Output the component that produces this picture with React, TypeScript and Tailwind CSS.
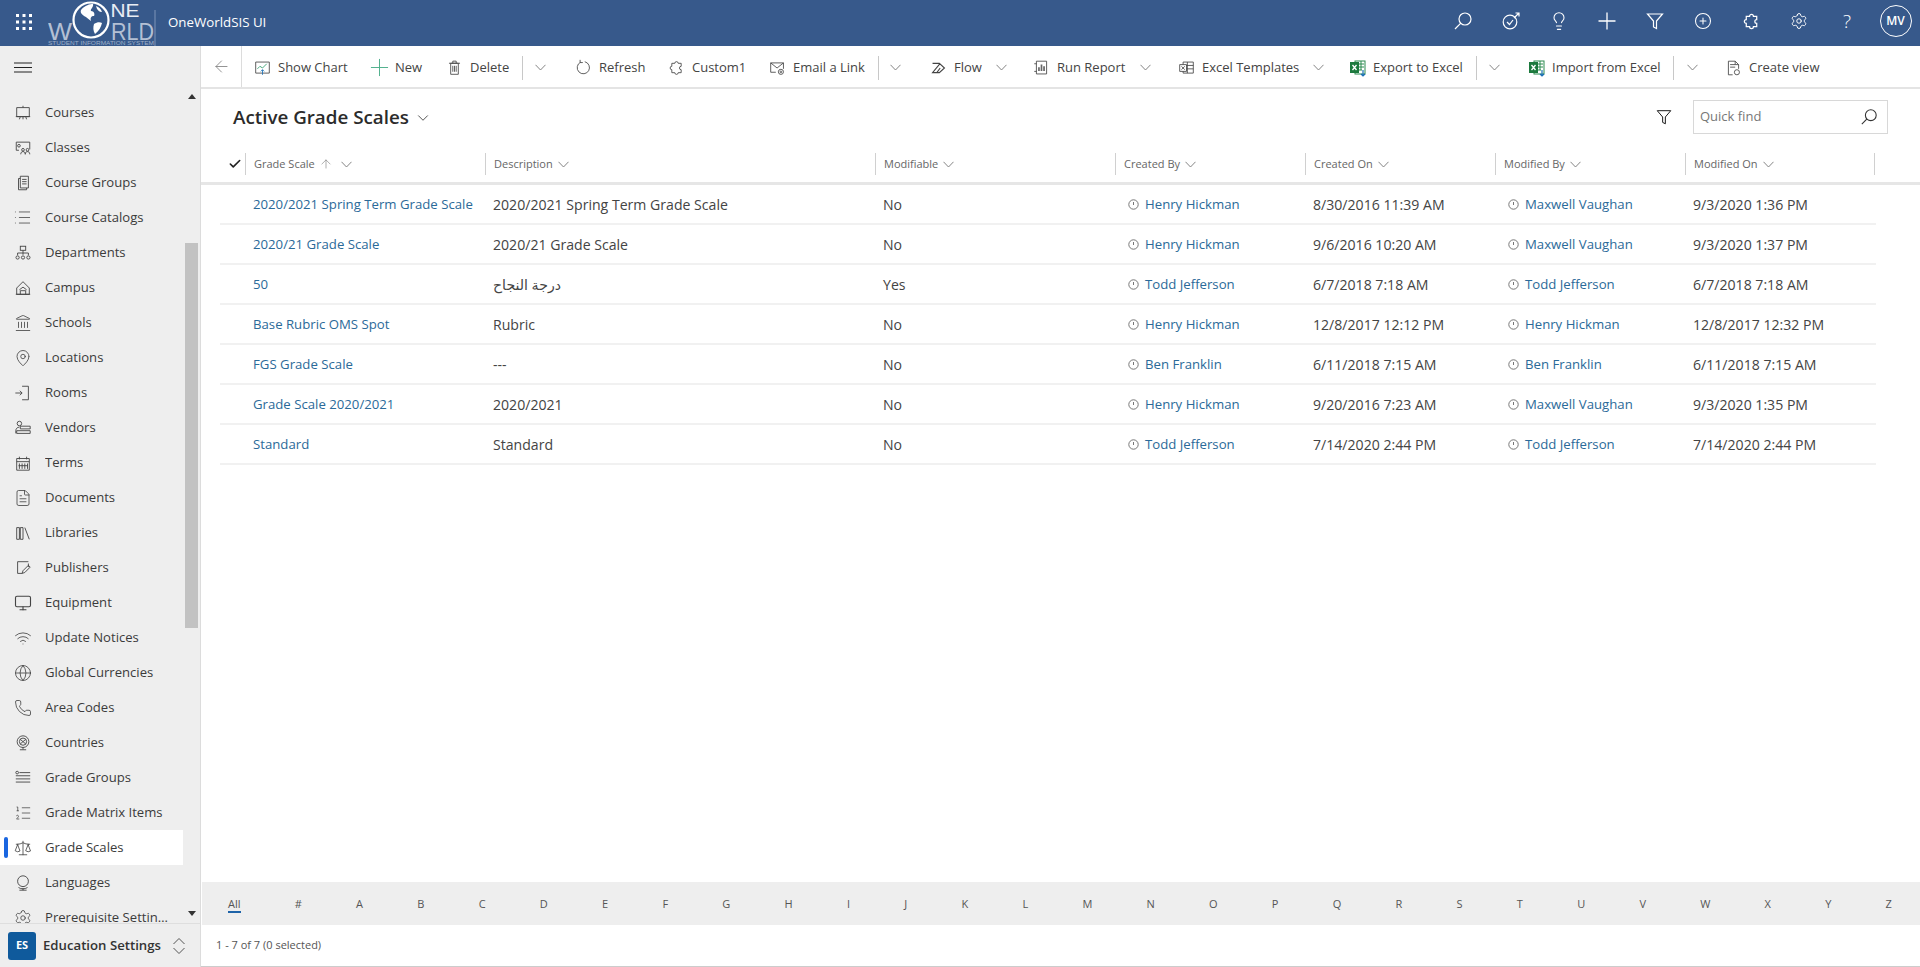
import React from "react";
import {
  Lightbulb, CirclePlus, Settings, ArrowLeft, List, Landmark, MapPin,
  Monitor, Wifi, Globe, Phone, ListOrdered, Scale, ChevronDown, ArrowUp, Check, FileText,
} from "lucide-react";

const S: React.FC<{ s?: number; w?: number; c?: string; children: React.ReactNode }> = ({ s = 18, w = 1, c = "", children }) => (
  <svg width={s} height={s} viewBox="0 0 20 20" fill="none" stroke="currentColor" strokeWidth={w} className={c}>
    {children}
  </svg>
);

const Puzzle = ({ s = 18, w = 1 }: { s?: number; w?: number }) => (
  <S s={s} w={w}>
    <path d="M4.5 4.5H8a2 2 0 1 1 4 0h3.5V8a2 2 0 1 0 0 4v3.5H12a2 2 0 1 1-4 0H4.5V12a2 2 0 1 1 0-4z" />
  </S>
);
const Funnel = ({ s = 18, w = 1 }: { s?: number; w?: number }) => (
  <S s={s} w={w}>
    <path d="M2.5 3h15l-6 7v7.5l-3-1.5v-6z" />
  </S>
);
const Lens = ({ s = 20, w = 1.2 }: { s?: number; w?: number }) => (
  <S s={s} w={w}>
    <circle cx={12} cy={8} r={6} />
    <path d="M7.8 12.2 2 18" />
  </S>
);
const Excel = () => (
  <svg width={18} height={18} viewBox="0 0 18 18" className="shrink-0">
    <rect x={6} y={2} width={10} height={13} fill="#fff" stroke="#2b8a4e" />
    <path d="M9 5h6M9 8h6M9 11h4M12 2v9" stroke="#2b8a4e" />
    <rect x={1} y={3} width={9} height={11} fill="#1d7a3e" />
    <path d="M3.5 6l4 5M7.5 6l-4 5" stroke="#fff" strokeWidth={1.3} />
    <path d="M14 11v6M12 15l2 2 2-2" stroke="#1a6fb5" strokeWidth={1.2} fill="none" />
  </svg>
);

const Chev = ({ c = "" }: { c?: string }) => (
  <svg width={11} height={7} viewBox="0 0 11 7" fill="none" stroke="currentColor" strokeWidth={0.9} className={c}>
    <path d="M0.5 0.8 5.5 6l5-5.2" />
  </svg>
);

const icons: Record<string, React.ReactNode> = {
  Courses: <S><path d="M3 4h14v10H3zM10 2v2M2 14h16M7 14l-1 3M10 14v3M13 14l1 3" /></S>,
  Classes: (
    <S><path d="M2.5 3.5h15v8M2.5 3.5v9h3" /><circle cx={5.5} cy={7.5} r={1.5} /><circle cx={10} cy={12} r={1.5} /><circle cx={15} cy={12} r={1.5} /><path d="M7.5 17c0-2 1-3 2.5-3s2.5 1 2.5 3M12.5 17c0-2 1-3 2.5-3s2.5 1 2.5 3" /></S>
  ),
  "Course Groups": <S><path d="M7 2.5h9v13H7zM7 5H5v12.5h9v-2M9 6h5M9 8.5h5M9 11h5" /></S>,
  "Course Catalogs": <List size={19} strokeWidth={1} />,
  Departments: (
    <S><rect x={7} y={2.5} width={6} height={4.5} /><path d="M10 7v5M4 12.500v-2.500h12v2.500" /><circle cx={4} cy={15} r={1.8} /><circle cx={10} cy={15} r={1.8} /><circle cx={16} cy={15} r={1.8} /></S>
  ),
  Campus: <S><path d="M3 17V10l7-7 7 7v7zM2 17h16M7 17v-4h6v4M6 12l4-3 4 3" /></S>,
  Schools: <Landmark size={18} strokeWidth={1.1} />,
  Locations: <MapPin size={18} strokeWidth={1.1} />,
  Rooms: <S><path d="M9 2.500h7v15H9M1.500 10H9M6.500 7.500 9 10l-2.500 2.500" /></S>,
  Vendors: <S><circle cx={6} cy={5} r={2.5} /><path d="M2 16v-3c0-2 1.500-4 4-4M7 8h11v3H7zM3 13h15v3H3z" /></S>,
  Terms: <S><path d="M3 5h14v13H3zM3 8.500h14M6 3v3M14 3v3M6 10.500v6M9 10.500v6M12 10.500v6M15 10.500v6M5 13h10" /></S>,
  Documents: <FileText size={18} strokeWidth={1.1} />,
  Libraries: <S><path d="M3 4h3v13H3zM7 4h3v13H7zM12 4l5 13" /></S>,
  Publishers: <S><path d="M4 3h12M4 3v13h5M16 5v4M9 16l1-3 6-6 2 2-6 6z" /></S>,
  Equipment: <Monitor size={18} strokeWidth={1.5} />,
  "Update Notices": <Wifi size={18} strokeWidth={1.1} />,
  "Global Currencies": <Globe size={18} strokeWidth={1.1} />,
  "Area Codes": <Phone size={18} strokeWidth={1.1} />,
  Countries: <S><circle cx={10} cy={8.500} r={6.500} /><circle cx={10} cy={8.500} r={4} /><path d="M7 6l6 5M13 6l-6 5M10 15v2M6.500 17.500h7" /></S>,
  "Grade Groups": <S><path d="M6 4h12M2 7.500h16M2 11h16M2 14.500h16" /><circle cx={3.500} cy={4} r={1.500} /></S>,
  "Grade Matrix Items": <ListOrdered size={18} strokeWidth={1} />,
  "Grade Scales": <Scale size={18} strokeWidth={1.1} />,
  Languages: <S><circle cx={10} cy={8} r={6} /><path d="M5 15c3 2 7 2 10 0M10 15.500V18M6 18h8" /></S>,
  "Prerequisite Settings": <Settings size={18} strokeWidth={1.1} />,
};

const navItems = Object.keys(icons);

const NavItem = ({ name }: { name: string }) => {
  const active = name === "Grade Scales";
  return (
    <div className={`relative flex h-[35px] w-[183px] shrink-0 items-center pl-[13px] ${active ? "bg-white" : ""}`}>
      {active && <span className="absolute left-[4px] top-[7px] h-[21px] w-[4px] rounded-sm bg-[#1a66e0]" />}
      <span className="flex w-[19px] justify-center text-[#444]">{icons[name]}</span>
      <span className="ml-[13px] w-[123px] truncate text-[13.1px] text-[#3b3b3b]">{name}</span>
    </div>
  );
};

const Cmd = ({ icon, label, w }: { icon: React.ReactNode; label: string; w: string }) => (
  <div className={`flex h-full shrink-0 items-center text-[13px] text-[#444] ${w}`}>
    <span className="mr-[7px] flex w-[17px] justify-center text-[#444]">{icon}</span>
    <span className="whitespace-nowrap">{label}</span>
  </div>
);

const Sep = () => <span className="h-[24px] w-px shrink-0 bg-[#c8c8c8]" />;

const HCell = ({ label, extra, last }: { label: string; extra?: React.ReactNode; last?: boolean }) => (
  <div className={`flex h-[22px] items-center border-l border-[#d0d0d0] pl-[8px] text-[11px] text-[#666] ${last ? "border-r" : ""}`}>
    <span>{label}</span>
    {extra}
    {!extra && <Chev c="ml-[5px] text-[#777]" />}
  </div>
);

const Owner = ({ name }: { name: string }) => (
  <div className="flex items-center pl-[13px] pt-[2px]">
    <svg width={11} height={11} viewBox="0 0 11 11" fill="none" stroke="#777" className="shrink-0">
      <circle cx={5.5} cy={5.5} r={4.7} />
      <path d="M5.5 3v3" />
    </svg>
    <span className="ml-[6px] text-[13.2px] text-[#2b6a99]">{name}</span>
  </div>
);

const rows = [
  ["2020/2021 Spring Term Grade Scale", "2020/2021 Spring Term Grade Scale", "No", "Henry Hickman", "8/30/2016 11:39 AM", "Maxwell Vaughan", "9/3/2020 1:36 PM"],
  ["2020/21 Grade Scale", "2020/21 Grade Scale", "No", "Henry Hickman", "9/6/2016 10:20 AM", "Maxwell Vaughan", "9/3/2020 1:37 PM"],
  ["50", "درجة النجاح", "Yes", "Todd Jefferson", "6/7/2018 7:18 AM", "Todd Jefferson", "6/7/2018 7:18 AM"],
  ["Base Rubric OMS Spot", "Rubric", "No", "Henry Hickman", "12/8/2017 12:12 PM", "Henry Hickman", "12/8/2017 12:32 PM"],
  ["FGS Grade Scale", "---", "No", "Ben Franklin", "6/11/2018 7:15 AM", "Ben Franklin", "6/11/2018 7:15 AM"],
  ["Grade Scale 2020/2021", "2020/2021", "No", "Henry Hickman", "9/20/2016 7:23 AM", "Maxwell Vaughan", "9/3/2020 1:35 PM"],
  ["Standard", "Standard", "No", "Todd Jefferson", "7/14/2020 2:44 PM", "Todd Jefferson", "7/14/2020 2:44 PM"],
];

const letters = "#ABCDEFGHIJKLMNOPQRSTUVWXYZ".split("");
const gridCols = "grid grid-cols-[25px_240px_390px_240px_190px_190px_190px_190px]";

const TopIcon = ({ children }: { children: React.ReactNode }) => (
  <div className="flex h-full w-[48px] items-center justify-center text-white">{children}</div>
);

export default function App() {
  return (
    <div className="flex h-[967px] w-[1920px] flex-col overflow-hidden bg-white font-['Open_Sans','DejaVu_Sans',sans-serif]">
      <header className="flex h-[46px] shrink-0 items-center bg-[#37598b] text-white">
        <div className="flex w-[48px] justify-center pb-[3px]">
          <svg width={16} height={16} viewBox="0 0 16 16" fill="#fff">
            {[0, 6.5, 13].flatMap((x) => [0, 6.5, 13].map((y) => <rect key={`${x}-${y}`} x={x} y={y} width={3} height={3} />))}
          </svg>
        </div>
        <svg width={108} height={46} viewBox="0 0 108 46" className="shrink-0 overflow-hidden" fill="none">
          <g fontFamily="'Liberation Sans', sans-serif" fill="#b4c0d4">
            <text x={62.5} y={17} fontSize={19} fill="#e8edf4" textLength={29} lengthAdjust="spacingAndGlyphs">NE</text>
            <text x={0} y={40} fontSize={24} textLength={24} lengthAdjust="spacingAndGlyphs">W</text>
            <text x={63} y={40} fontSize={24} textLength={43} lengthAdjust="spacingAndGlyphs">RLD</text>
            <text x={0} y={45} fontSize={4.6} textLength={106} lengthAdjust="spacingAndGlyphs" fill="#9fb0c9">STUDENT INFORMATION SYSTEM</text>
          </g>
          <circle cx={43} cy={20} r={17.5} fill="#37598b" stroke="#fff" strokeWidth={2.2} />
          <path d="M33 10c4-5 9-6 12-6 1 3-3 5-2 7 3 0 4 3 3 5-3 0-4 2-3 5-3-2-4-4-7-5-2-2-4-3-3-6zM46 24c3-2 6-2 8-1-1 4-3 8-7 11-2-3-2-7-1-10zM48 6c3 1 5 3 6 6-3 0-5-2-6-6z" fill="#fff" />
          <path d="M107 10v36" stroke="#7f95b8" />
        </svg>
        <span className="ml-[12px] text-[13.3px]">OneWorldSIS UI</span>
        <div className="ml-auto flex h-full items-center pb-[4px]">
          <TopIcon><Lens s={20} /></TopIcon>
          <TopIcon>
            <S s={20} w={1.2}><circle cx={9} cy={11} r={6.8} /><path d="M6 11l2.500 2.500 3.500-4.500M13 7l5-5M14.500 2H18v3.500" /></S>
          </TopIcon>
          <TopIcon><Lightbulb size={20} strokeWidth={1.3} /></TopIcon>
          <TopIcon><S s={20} w={1.3}><path d="M10 1.500v17M1.500 10h17" /></S></TopIcon>
          <TopIcon><Funnel s={20} w={1.2} /></TopIcon>
          <TopIcon><CirclePlus size={18} strokeWidth={1.4} /></TopIcon>
          <TopIcon><Puzzle s={19} w={1.3} /></TopIcon>
          <TopIcon><Settings size={18} strokeWidth={1.3} /></TopIcon>
          <TopIcon><span className="text-[19px] font-light">?</span></TopIcon>
          <div className="flex h-full w-[49px] items-center justify-center">
            <span className="flex h-[32px] w-[32px] items-center justify-center rounded-full border border-white text-[12px] font-semibold">MV</span>
          </div>
        </div>
      </header>

      <div className="flex min-h-0 flex-1">
        <aside className="flex w-[201px] shrink-0 flex-col border-r border-[#dcdcdc] bg-[#eeeeee]">
          <div className="flex h-[42px] shrink-0 items-center pl-[14px] text-[#222]">
            <svg width={18} height={11} viewBox="0 0 18 11" fill="none" stroke="currentColor">
              <path d="M0 1h18M0 5.500h18M0 10h18" />
            </svg>
          </div>
          <div className="flex min-h-0 flex-1 overflow-hidden">
            <nav className="flex w-[183px] shrink-0 flex-col pt-[7px]">
              {navItems.map((n) => <NavItem key={n} name={n} />)}
            </nav>
            <div className="flex w-[17px] flex-col items-center">
              <span className="mt-[6px] h-0 w-0 border-x-[4px] border-b-[5px] border-x-transparent border-b-[#333]" />
              <div className="mt-[144px] h-[385px] w-[13px] bg-[#c2c2c2]" />
              <span className="mt-[283px] h-0 w-0 border-x-[4px] border-t-[5px] border-x-transparent border-t-[#333]" />
            </div>
          </div>
          <div className="flex h-[44px] shrink-0 items-center border-t border-[#dedede] pl-[8px]">
            <span className="flex h-[28px] w-[28px] items-center justify-center rounded-[3px] bg-[#0f5a9c] text-[11px] font-bold text-white">ES</span>
            <span className="ml-[7px] whitespace-nowrap text-[13.2px] font-semibold text-[#333]">Education Settings</span>
            <svg width={14} height={18} viewBox="0 0 14 18" fill="none" stroke="#555" className="ml-[11px]">
              <path d="M1.500 7 7 1.500 12.500 7M1.500 11 7 16.500 12.500 11" />
            </svg>
          </div>
        </aside>

        <main className="flex min-w-0 flex-1 flex-col">
          <div className="flex h-[43px] shrink-0 items-center border-b-2 border-[#e4e4e4]">
            <div className="flex h-full w-[41px] shrink-0 items-center justify-center border-r border-[#dcdcdc] text-[#777]">
              <ArrowLeft size={19} strokeWidth={1} />
            </div>
            <div className="flex h-full items-center pl-[12px] pt-[2px]">
              <Cmd w="w-[117px]" label="Show Chart" icon={
                <S s={18}><path d="M2 3h16v13H2z" /><path d="M4 11l3-3 3 2 5-5" stroke="#2f9e6e" /><path d="M10 18v-6M8 14l2-2 2 2" stroke="#1a6fb5" /></S>
              } />
              <Cmd w="w-[75px]" label="New" icon={<span className="text-[#4cae8a]"><S s={19}><path d="M10 1v18M1 10h18" /></S></span>} />
              <Cmd w="w-[76px]" label="Delete" icon={<S s={19}><path d="M5.500 5h9v13h-9zM3.500 5h13M8 5V2.500h4V5M8 8v7M10 8v7M12 8v7" /></S>} />
              <Sep />
              <div className="flex h-full w-[34px] shrink-0 items-center justify-center"><Chev c="text-[#777]" /></div>
              <div className="ml-[18px] h-full"><Cmd w="w-[93px]" label="Refresh" icon={<S s={19}><path d="M11.500 3.200a7.200 7.200 0 1 1-5 .6M6 1v3.200h3.200" /></S>} /></div>
              <Cmd w="w-[101px]" label="Custom1" icon={<Puzzle s={18} />} />
              <Cmd w="w-[109px]" label="Email a Link" icon={
                <S s={18}><path d="M8 15H2V4h15v7M2 4l7.500 6L17 4" /><circle cx={14} cy={14.500} r={3} /><circle cx={14} cy={14.500} r={1} /></S>
              } />
              <Sep />
              <div className="flex h-full w-[32px] shrink-0 items-center justify-center"><Chev c="text-[#777]" /></div>
              <div className="ml-[19px] h-full"><Cmd w="w-[54px]" label="Flow" icon={
                <S s={18} w={1.3}><path d="M3 4.500h8l6 5.500-6 5.500H3l9-11M8 15.500l4-5.500" /></S>
              } /></div>
              <div className="flex h-full w-[34px] shrink-0 items-center justify-center"><Chev c="text-[#777]" /></div>
              <div className="ml-[15px] h-full"><Cmd w="w-[95px]" label="Run Report" icon={
                <S s={18}><path d="M4 2h12v15H4zM1.500 5H4M1.500 14H4" /><path d="M7 13.500V9M10 13.500V6M13 13.500V8" stroke="#666" strokeWidth={2} /></S>
              } /></div>
              <div className="flex h-full w-[34px] shrink-0 items-center justify-center"><Chev c="text-[#777]" /></div>
              <div className="ml-[16px] h-full"><Cmd w="w-[123px]" label="Excel Templates" icon={
                <S s={18}><path d="M6 3h12v13H6zM6 7h12M6 11h12M11 3v13" /><path d="M2 6h8v8H2z" fill="#fff" /><path d="M4 8l4 4M8 8l-4 4" /></S>
              } /></div>
              <div className="flex h-full w-[34px] shrink-0 items-center justify-center"><Chev c="text-[#777]" /></div>
              <div className="ml-[14px] h-full"><Cmd w="w-[127px]" label="Export to Excel" icon={<Excel />} /></div>
              <Sep />
              <div className="flex h-full w-[34px] shrink-0 items-center justify-center"><Chev c="text-[#777]" /></div>
              <div className="ml-[17px] h-full"><Cmd w="w-[145px]" label="Import from Excel" icon={<Excel />} /></div>
              <Sep />
              <div className="flex h-full w-[36px] shrink-0 items-center justify-center"><Chev c="text-[#777]" /></div>
              <div className="ml-[15px] h-full"><Cmd w="w-[100px]" label="Create view" icon={
                <S s={18}><path d="M9 18H4V2h8l4 4v5M6 6h6M6 9h6M12 2v4h4" /><circle cx={14} cy={15} r={3} /></S>
              } /></div>
            </div>
          </div>

          <div className="flex h-[55px] shrink-0 items-center pl-[32px] pr-[32px]">
            <h1 className="mt-[2px] text-[18.8px] font-semibold text-[#2b2b2b]">Active Grade Scales</h1>
            <ChevronDown size={18} strokeWidth={1.2} className="ml-[5px] mt-[2px] text-[#444]" />
            <div className="ml-auto flex items-center">
              <Funnel s={18} />
              <div className="ml-[20px] flex h-[34px] w-[195px] items-center justify-between border border-[#d8d8d8] pl-[6px] pr-[9px]">
                <span className="pt-[1px] text-[13px] text-[#777]">Quick find</span>
                <span className="text-[#333]"><Lens s={18} /></span>
              </div>
            </div>
          </div>

          <div className="flex h-[41px] shrink-0 items-center border-b-[3px] border-[#e6e6e6] pl-[19px] pr-[44px] pt-[2px]">
            <div className={`${gridCols} w-full items-center`}>
              <div className="flex justify-end pr-[3px]"><Check size={14} strokeWidth={2.8} className="text-[#222]" /></div>
              <HCell label="Grade Scale" extra={<>
                <ArrowUp size={14} strokeWidth={1} className="ml-[4px] text-[#777]" />
                <Chev c="ml-[8px] text-[#777]" />
              </>} />
              <HCell label="Description" />
              <HCell label="Modifiable" />
              <HCell label="Created By" />
              <HCell label="Created On" />
              <HCell label="Modified By" />
              <HCell label="Modified On" last />
            </div>
          </div>

          <div className="flex shrink-0 flex-col pl-[19px] pr-[44px]">
            {rows.map((r) => (
              <div key={r[0]} className={`${gridCols} h-[40px] items-center border-b-2 border-[#f1f1f1]`}>
                <span />
                <span className="whitespace-nowrap pl-[8px] pt-[2px] text-[13.2px] text-[#2b6a99]">{r[0]}</span>
                <span className="pl-[8px] pt-[1px] text-[14.1px] text-[#444]">{r[1]}</span>
                <span className="pl-[8px] pt-[1px] text-[14.1px] text-[#444]">{r[2]}</span>
                <Owner name={r[3]} />
                <span className="pl-[8px] pt-[1px] text-[14.1px] text-[#444]">{r[4]}</span>
                <Owner name={r[5]} />
                <span className="pl-[8px] pt-[1px] text-[14.1px] text-[#444]">{r[6]}</span>
              </div>
            ))}
          </div>

          <div className="min-h-0 flex-1" />

          <div className="ml-[1px] flex h-[43px] shrink-0 items-center justify-between bg-[#eeeeee] pl-[26px] pr-[28px] pt-[2px]">
            <span className="border-b-2 border-[#1e63a8] text-[11px] leading-[15px] text-[#555]">All</span>
            {letters.map((l) => (
              <span key={l} className="text-[11px] text-[#555]">{l}</span>
            ))}
          </div>
          <div className="flex h-[42px] shrink-0 items-center border-b border-[#cccccc] pl-[15px] text-[11px] text-[#555]">
            1 - 7 of 7 (0 selected)
          </div>
        </main>
      </div>
    </div>
  );
}
